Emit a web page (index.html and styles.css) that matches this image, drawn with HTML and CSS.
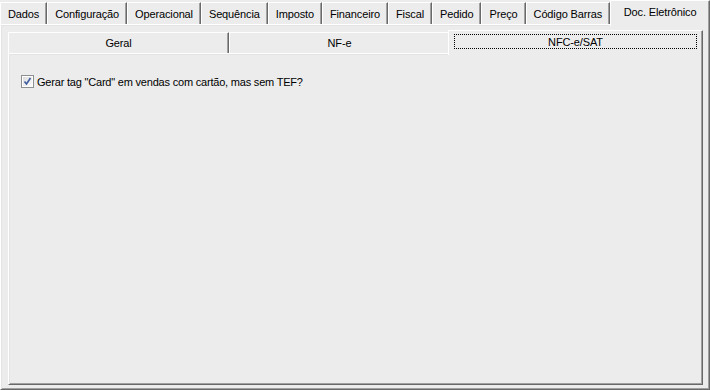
FILE: index.html
```html
<!DOCTYPE html>
<html lang="pt">
<head>
  <meta charset="UTF-8">
  <title>Parâmetros</title>
  <link rel="stylesheet" href="styles.css">
</head>
<body>
  <div class="tabs">
    <div class="tab">Dados</div>
    <div class="tab">Configuração</div>
    <div class="tab">Operacional</div>
    <div class="tab">Sequência</div>
    <div class="tab">Imposto</div>
    <div class="tab">Financeiro</div>
    <div class="tab">Fiscal</div>
    <div class="tab">Pedido</div>
    <div class="tab">Preço</div>
    <div class="tab">Código Barras</div>
    <div class="tab active">Doc. Eletrônico</div>
  </div>
  <div class="panel">
    <div class="subtabs">
      <div class="subtab">Geral</div>
      <div class="subtab">NF-e</div>
      <div class="subtab active"><div class="focus">NFC-e/SAT</div></div>
    </div>
    <div class="subpanel">
      <label class="check">
        <svg width="13" height="13" viewBox="0 0 13 13">
          <defs>
            <linearGradient id="cb" x1="0" y1="0" x2="1" y2="1">
              <stop offset="0" stop-color="#dcdcdc"/>
              <stop offset="1" stop-color="#fbfbfb"/>
            </linearGradient>
          </defs>
          <rect x="0.5" y="0.5" width="12" height="12" fill="#fff" stroke="#8e8f8f"/>
          <rect x="2" y="2" width="9" height="9" fill="url(#cb)"/>
          <path d="M3.5 6.5 L5.5 9 L9.5 3" fill="none" stroke="#3d5b9e" stroke-width="1.6"/>
        </svg>
        <span>Gerar tag "Card" em vendas com cartão, mas sem TEF?</span>
      </label>
    </div>
  </div>
</body>
</html>
```

FILE: styles.css
```css
body {
  margin: 0;
  width: 710px;
  height: 390px;
  background: #ececec;
  font-family: 'Liberation Sans', Arial, sans-serif;
  font-size: 11px;
  letter-spacing: -0.13px;
  color: #000;
  display: flex;
  flex-direction: column;
  overflow: hidden;
}
.tabs {
  display: flex;
  align-items: flex-end;
  height: 24px;
  flex-shrink: 0;
}
.tab {
  height: 22px;
  box-sizing: border-box;
  padding: 5px 7px 3px;
  line-height: 13px;
  white-space: nowrap;
  border-top: 1px solid #fff;
  border-left: 1px solid #fff;
  border-right: 1px solid #696969;
  box-shadow: inset -1px 0 #a0a0a0;
}
.tab.active {
  flex: 1;
  height: 26px;
  margin-bottom: -2px;
  padding: 5px 0 7px;
  text-align: center;
  background: #ececec;
  position: relative;
  z-index: 1;
}
.panel {
  flex: 1;
  display: flex;
  flex-direction: column;
  padding: 5px 6px 4px 7px;
  border: 1px solid;
  border-color: #fff #696969 #696969 #fff;
  box-shadow: inset 1px 1px #e3e3e3, inset -1px -1px #a0a0a0;
}
.subtabs {
  display: flex;
  align-items: flex-end;
  height: 23px;
  flex-shrink: 0;
}
.subtab {
  width: 221px;
  height: 21px;
  box-sizing: border-box;
  padding: 4px 0 3px;
  line-height: 13px;
  text-align: center;
  border-top: 1px solid #fff;
  border-left: 1px solid #fff;
  border-right: 1px solid #696969;
  box-shadow: inset -1px 0 #a0a0a0;
}
.subtab.active {
  flex: 1;
  height: 25px;
  margin: 0 0 -2px -2px;
  padding: 3px 5px 5px 5px;
  background: #ececec;
  position: relative;
  z-index: 1;
}
.focus {
  border: 1px dotted #000;
  padding-top: 1px;
  line-height: 12px;
}
.subpanel {
  flex: 1;
  padding: 21px 12px;
  border: 1px solid;
  border-color: #fff #696969 #696969 #fff;
  box-shadow: inset 1px 1px #e3e3e3, inset -1px -1px #a0a0a0;
}
.check {
  display: flex;
  align-items: center;
  gap: 3px;
  letter-spacing: -0.2px;
}
.check svg {
  display: block;
}
```
